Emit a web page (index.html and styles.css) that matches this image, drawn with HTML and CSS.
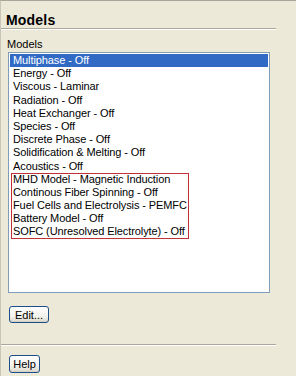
FILE: index.html
```html
<!DOCTYPE html>
<html lang="en">

<head>
    <meta charset="UTF-8">
    <title>Models</title>
    <link rel="stylesheet" href="styles.css">
</head>

<body>
    <div class="panel">
        <h1 class="panel-title">Models</h1>
        <div class="rule"></div>

        <div class="field-label">Models</div>
        <div class="listbox">
            <div class="item selected">Multiphase - Off</div>
            <div class="item">Energy - Off</div>
            <div class="item">Viscous - Laminar</div>
            <div class="item">Radiation - Off</div>
            <div class="item">Heat Exchanger - Off</div>
            <div class="item">Species - Off</div>
            <div class="item">Discrete Phase - Off</div>
            <div class="item">Solidification &amp; Melting - Off</div>
            <div class="item">Acoustics - Off</div>
            <div class="highlight">
                <div class="item">MHD Model - Magnetic Induction</div>
                <div class="item">Continous Fiber Spinning - Off</div>
                <div class="item">Fuel Cells and Electrolysis - PEMFC</div>
                <div class="item">Battery Model - Off</div>
                <div class="item">SOFC (Unresolved Electrolyte) - Off</div>
            </div>
        </div>

        <button type="button" class="xp-button edit-button">Edit...</button>
        <div class="rule bottom-rule"></div>
        <button type="button" class="xp-button help-button">Help</button>
    </div>
</body>

</html>
```

FILE: styles.css
```css
* {
    margin: 0;
    padding: 0;
    box-sizing: border-box;
}

body {
    width: 296px;
    height: 376px;
    overflow: hidden;
    background-color: #ece9d8;
    font-family: 'Liberation Sans', Arial, sans-serif;
    font-size: 11px;
    color: #000;
}

.panel {
    height: 376px;
    border-top: 1px solid #a7a69b;
    border-left: 1px solid #c9c6b8;
}

.panel-title {
    padding: 11px 0 0 5px;
    font-size: 14px;
    line-height: 16px;
    font-weight: bold;
    letter-spacing: 0.2px;
}

.rule {
    width: 275px;
    height: 2px;
    border-top: 1px solid #aca899;
    border-bottom: 1px solid #fff;
}

.field-label {
    margin: 8px 0 0 6px;
    line-height: 13px;
}

.listbox {
    width: 262px;
    height: 241px;
    margin: 1px 0 0 7px;
    padding: 1px;
    background: #fff;
    border: 1px solid #7f9db9;
}

.item {
    padding-left: 3px;
    line-height: 13.2px;
    height: 13.2px;
    white-space: nowrap;
    letter-spacing: -0.1px;
}

.item.selected {
    background-color: #316ac5;
    color: #fff;
}

.highlight {
    width: 178px;
    margin-left: 1px;
    box-shadow: inset 0 0 0 1px #c4303a;
}

.highlight .item {
    padding-left: 2px;
}

.xp-button {
    display: block;
    margin-left: 8px;
    font-family: inherit;
    font-size: 11px;
    color: #000;
    border: 1px solid #1c4f88;
    border-radius: 3px;
    background: linear-gradient(#ffffff, #f3f2ec 60%, #dcd8cb);
    box-shadow: inset 0 -1px 0 #d6d0c5;
}

.edit-button {
    width: 40px;
    height: 17px;
    margin-top: 13px;
}

.bottom-rule {
    margin-top: 21px;
}

.help-button {
    width: 31px;
    height: 18px;
    margin-top: 9px;
}
```
